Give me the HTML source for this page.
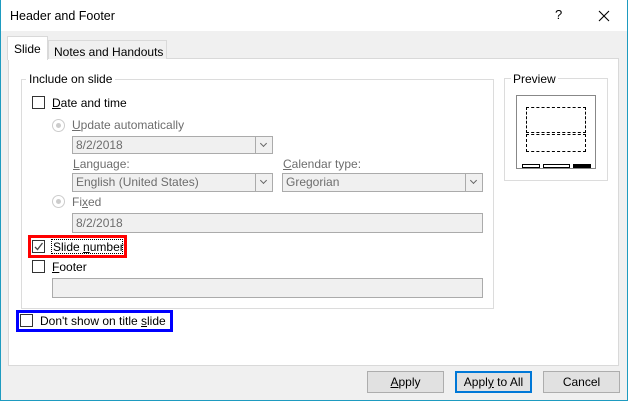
<!DOCTYPE html>
<html><head><style>
*{box-sizing:border-box;margin:0;padding:0}
body{width:628px;height:401px;overflow:hidden;background:#f0f0f0;font-family:"Liberation Sans",sans-serif;font-size:12px;color:#000;position:relative}
.a{position:absolute}
.win{left:0;top:0;width:628px;height:401px;border:1px solid #1e9bc0;border-top:none}
.title{left:1px;top:0;width:626px;height:31px;background:#fff}
.t{position:absolute;white-space:nowrap;line-height:14px}
.cb{position:absolute;width:13px;height:13px;border:1px solid #333;background:#fff}
.rad{position:absolute;width:13px;height:13px;border:1px solid #ccc;border-radius:50%;background:#fff}
.rad::after{content:"";position:absolute;left:3px;top:3px;width:5px;height:5px;border-radius:50%;background:#ccc}
.box{position:absolute;background:#f0f0f0;border:1px solid #ababab}
.dd{position:absolute;background:#f0f0f0;border:1px solid #ababab;color:#6d6d6d;padding:1px 0 0 3px;line-height:14px}
.dd i{position:absolute;right:0;top:0;width:17px;height:100%;border-left:1px solid #ababab;background:#f0f0f0}
.dd i::after{content:"";position:absolute;left:5px;top:4px;width:4px;height:4px;border-right:1px solid #666;border-bottom:1px solid #666;transform:rotate(45deg)}
.g{color:#6d6d6d}
.btn{position:absolute;top:371px;width:77px;height:22px;background:#e1e1e1;border:1px solid #adadad;text-align:center;line-height:20px}
u{text-decoration:underline}
</style></head><body>
<div class="a title"></div>
<div class="t" style="left:10px;top:9px;font-size:12.5px">Header and Footer</div>
<div class="t" style="left:555px;top:8px;font-size:13px">?</div>
<svg class="a" style="left:598px;top:10px" width="12" height="12"><path d="M1 1L11 11M11 1L1 11" stroke="#000" stroke-width="1.1"/></svg>
<div class="a win"></div>

<div class="a" style="left:8px;top:58px;width:611px;height:308px;background:#fff;border:1px solid #d9d9d9"></div>
<div class="a" style="left:48px;top:40px;width:119px;height:19px;background:#f0f0f0;border:1px solid #d9d9d9;border-bottom:none"></div>
<div class="t" style="left:54px;top:45px">Notes and Handouts</div>
<div class="a" style="left:7px;top:36px;width:41px;height:24px;background:#fff;border:1px solid #d9d9d9;border-bottom:none"></div>
<div class="t" style="left:14px;top:42px">Slide</div>

<div class="a" style="left:21px;top:79px;width:473px;height:230px;border:1px solid #dcdcdc"></div>
<div class="t" style="left:26px;top:72px;background:#fff;padding:0 3px">Include on slide</div>

<div class="cb" style="left:32px;top:96px"></div>
<div class="t" style="left:52px;top:96px"><u>D</u>ate and time</div>
<div class="rad" style="left:52px;top:119px"></div>
<div class="t g" style="left:72px;top:118px"><u>U</u>pdate automatically</div>
<div class="dd" style="left:72px;top:136px;width:201px;height:18px">8/2/2018<i></i></div>
<div class="t g" style="left:73px;top:157px"><u>L</u>anguage:</div>
<div class="dd" style="left:72px;top:173px;width:201px;height:19px">English (United States)<i></i></div>
<div class="t g" style="left:283px;top:157px"><u>C</u>alendar type:</div>
<div class="dd" style="left:282px;top:173px;width:201px;height:19px">Gregorian<i></i></div>
<div class="rad" style="left:52px;top:195px"></div>
<div class="t g" style="left:72px;top:195px">Fi<u>x</u>ed</div>
<div class="dd" style="left:72px;top:213px;width:411px;height:20px;padding-top:2px">8/2/2018</div>

<div class="a" style="left:28px;top:235px;width:99px;height:23px;border:3px solid #f00"></div>
<div class="cb" style="left:32px;top:240px"></div>
<svg class="a" style="left:33px;top:241px" width="11" height="11"><path d="M2 6L4.5 8.5L9.5 2" stroke="#444" stroke-width="1.3" fill="none"/></svg>
<div class="a" style="left:51px;top:239px;width:72px;height:15px;border:1px dotted #000"></div>
<div class="t" style="left:53px;top:240px">Slide <u>n</u>umber</div>
<div class="cb" style="left:32px;top:260px"></div>
<div class="t" style="left:52px;top:260px"><u>F</u>ooter</div>
<div class="box" style="left:52px;top:278px;width:431px;height:20px"></div>

<div class="a" style="left:16px;top:310px;width:157px;height:22px;border:3px solid #0000ff"></div>
<div class="cb" style="left:20px;top:314px"></div>
<div class="t" style="left:40px;top:314px">Don't show on title <u>s</u>lide</div>

<div class="a" style="left:504px;top:78px;width:104px;height:103px;border:1px solid #dcdcdc"></div>
<div class="t" style="left:511px;top:72px;background:#fff;padding:0 2px">Preview</div>
<div class="a" style="left:516px;top:95px;width:80px;height:74px;border:1px solid #888"></div>
<div class="a" style="left:526px;top:107px;width:60px;height:26px;border:1px dashed #000"></div>
<div class="a" style="left:526px;top:134px;width:60px;height:18px;border:1px dashed #000"></div>
<div class="a" style="left:522px;top:164px;width:18px;height:4px;border:1px solid #000"></div>
<div class="a" style="left:543px;top:164px;width:27px;height:4px;border:1px solid #000"></div>
<div class="a" style="left:573px;top:164px;width:18px;height:4px;background:#000"></div>

<div class="btn" style="left:367px"><u>A</u>pply</div>
<div class="btn" style="left:455px;border:2px solid #0078d7;line-height:18px">Appl<u>y</u> to All</div>
<div class="btn" style="left:543px">Cancel</div>
</body></html>
